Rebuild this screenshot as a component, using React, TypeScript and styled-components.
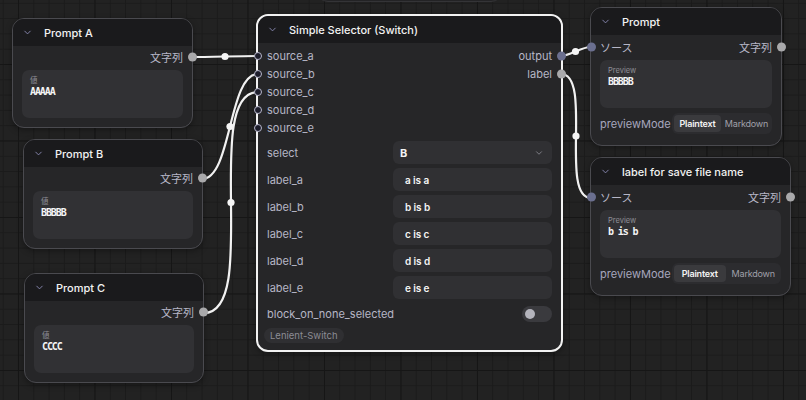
import React from "react";
import styled, { createGlobalStyle } from "styled-components";
import { ChevronDown } from "lucide-react";

const GlobalStyle = createGlobalStyle`
  html, body {
    margin: 0;
    padding: 0;
    background: #212121;
  }
  body {
    font-family: Inter, "Noto Sans CJK JP", sans-serif;
  }
`;

type Pt = { x: number; y: number };

// litegraph-style spline between two sockets
const wire = (a: Pt, b: Pt) => {
  const d = Math.hypot(b.x - a.x, b.y - a.y) * 0.25;
  const c1 = a.x + d;
  const c2 = b.x - d;
  return {
    path: `M${a.x} ${a.y} C${c1} ${a.y} ${c2} ${b.y} ${b.x} ${b.y}`,
    mid: { x: (a.x + 3 * c1 + 3 * c2 + b.x) / 8, y: (a.y + b.y) / 2 },
  };
};

const links: [Pt, Pt][] = [
  [{ x: 192, y: 57 }, { x: 258, y: 56 }],
  [{ x: 202, y: 179 }, { x: 258, y: 74 }],
  [{ x: 204, y: 313 }, { x: 258, y: 92 }],
  [{ x: 561, y: 56 }, { x: 590, y: 47 }],
  [{ x: 561, y: 74 }, { x: 591, y: 198 }],
];

const Canvas = styled.div`
  position: relative;
  width: 806px;
  height: 400px;
  overflow: hidden;
  background-color: #222222;
  background-image: linear-gradient(#161616 1px, transparent 1px),
    linear-gradient(90deg, #161616 1px, transparent 1px),
    linear-gradient(#1b1b1b 1px, transparent 1px),
    linear-gradient(90deg, #1b1b1b 1px, transparent 1px);
  background-size: 76.5px 76.5px, 76.5px 76.5px, 15.3px 15.3px, 15.3px 15.3px;
  background-position: 18px 64px;
`;

const Wires = styled.svg`
  position: absolute;
  inset: 0;
`;

const Node = styled.div<{ $x: number; $y: number; $w: number; $selected?: boolean }>`
  position: absolute;
  left: ${(p) => p.$x}px;
  top: ${(p) => p.$y}px;
  width: ${(p) => p.$w}px;
  box-sizing: border-box;
  background: #262628;
  border: ${(p) => (p.$selected ? "2px solid #f2f2f2" : "1px solid #4a4a4f")};
  border-radius: 12px;
  box-shadow: 0 2px 6px rgba(0, 0, 0, 0.35);
`;

const Ghost = styled(Node)`
  height: 62px;
  border-color: #343437;
  background: #232325;
  box-shadow: none;
`;

const Header = styled.div`
  height: 27px;
  display: flex;
  align-items: center;
  gap: 11px;
  padding: 0 9px;
  background: #1a1a1c;
  border-radius: 11px 11px 0 0;
  color: #f2f2f2;
  font-size: 11px;
  font-weight: 500;
  white-space: nowrap;
`;

const Body = styled.div<{ $top?: number; $bottom?: number }>`
  display: flex;
  flex-direction: column;
  padding: ${(p) => p.$top ?? 3}px 9px ${(p) => p.$bottom ?? 9}px;
`;

const SlotRow = styled.div<{ $h?: number }>`
  position: relative;
  height: ${(p) => p.$h ?? 16}px;
  display: flex;
  align-items: center;
  justify-content: space-between;
  font-size: 11px;
  color: #b6b6c6;
  white-space: nowrap;
`;

const SlotName = styled.span<{ $right?: boolean }>`
  position: relative;
  margin-left: ${(p) => (p.$right ? "auto" : "0")};
`;

const Port = styled.span<{ $side: "left" | "right"; $color: string; $ring?: boolean; $size?: number }>`
  position: absolute;
  top: 50%;
  ${(p) => p.$side}: -13.5px;
  width: ${(p) => p.$size ?? 9}px;
  height: ${(p) => p.$size ?? 9}px;
  transform: translateY(-50%);
  box-sizing: border-box;
  border-radius: 50%;
  background: ${(p) => p.$color};
  border: ${(p) => (p.$ring ? "1.5px solid #b8b8cc" : "none")};
`;

const TextBox = styled.div`
  margin-top: 5px;
  height: 48px;
  box-sizing: border-box;
  padding: 6px 8px;
  border-radius: 7px;
  background: #313134;
`;

const BoxLabel = styled.div`
  font-size: 7.5px;
  color: #8e8e96;
  line-height: 10px;
`;

const Mono = styled.div`
  font-family: "DejaVu Sans Mono", monospace;
  font-weight: bold;
  font-size: 10px;
  letter-spacing: -1.1px;
  color: #f4f4f4;
  line-height: 12px;
  white-space: pre;
`;

const Widgets = styled.div`
  margin-top: 4px;
  display: grid;
  grid-template-columns: 126px 1fr;
  grid-auto-rows: 23px;
  row-gap: 4px;
  align-items: center;
  font-size: 11px;
  color: #b6b6c6;
`;

const Field = styled.div<{ $select?: boolean }>`
  height: 23px;
  display: flex;
  align-items: center;
  justify-content: space-between;
  padding: 0 8px 0 ${(p) => (p.$select ? 7 : 12)}px;
  box-sizing: border-box;
  border-radius: 6px;
  background: #303033;
  color: #f4f4f4;
  font-size: ${(p) => (p.$select ? 11 : 10)}px;
  font-weight: ${(p) => (p.$select ? 700 : 600)};
  letter-spacing: ${(p) => (p.$select ? 0 : -0.1)}px;
  white-space: pre;
`;

const ToggleRow = styled.div`
  margin-top: 7px;
  height: 16px;
  display: flex;
  align-items: center;
  justify-content: space-between;
  font-size: 11px;
  color: #b6b6c6;
`;

const Toggle = styled.span`
  width: 30px;
  height: 16px;
  border-radius: 8px;
  background: #3a3a3e;
  display: flex;
  align-items: center;
  padding-left: 3px;
  box-sizing: border-box;
  &::before {
    content: "";
    width: 10px;
    height: 10px;
    border-radius: 50%;
    background: #b4b4bc;
  }
`;

const Badge = styled.span`
  align-self: flex-start;
  margin-top: 6px;
  margin-left: -3px;
  height: 15px;
  display: flex;
  align-items: center;
  padding: 0 6px;
  border-radius: 8px;
  background: #2f2f32;
  color: #8c8c94;
  font-size: 9.5px;
`;

const ModeRow = styled.div`
  margin-top: 5px;
  height: 21px;
  display: flex;
  align-items: center;
  font-size: 11px;
  color: #a6a6be;
`;

const ModeLabel = styled.span`
  width: 72px;
  flex: none;
`;

const Segmented = styled.div`
  flex: 1;
  height: 21px;
  display: flex;
  padding: 2px;
  box-sizing: border-box;
  gap: 2px;
  border-radius: 6px;
  background: #2c2c2f;
`;

const Segment = styled.span<{ $active?: boolean }>`
  flex: 1;
  display: flex;
  align-items: center;
  justify-content: center;
  border-radius: 4px;
  font-size: 9px;
  letter-spacing: -0.2px;
  font-weight: ${(p) => (p.$active ? 600 : 400)};
  color: ${(p) => (p.$active ? "#f4f4f4" : "#a0a0aa")};
  background: ${(p) => (p.$active ? "#3a3a3d" : "transparent")};
`;

const Chevron = () => <ChevronDown size={11} color="#8a8ab4" strokeWidth={2} />;

const STRING_PORT = "#a9a9ab";
const SOURCE_PORT = "#6b6f8f";

type PromptProps = { x: number; y: number; w: number; title: string; value: string };

const PromptNode = ({ x, y, w, title, value }: PromptProps) => (
  <Node $x={x} $y={y} $w={w}>
    <Header>
      <Chevron />
      {title}
    </Header>
    <Body>
      <SlotRow>
        <SlotName $right>文字列</SlotName>
        <Port $side="right" $color={STRING_PORT} />
      </SlotRow>
      <TextBox>
        <BoxLabel>値</BoxLabel>
        <Mono>{value}</Mono>
      </TextBox>
    </Body>
  </Node>
);

const PreviewNode = ({ x, y, w, title, value }: PromptProps) => (
  <Node $x={x} $y={y} $w={w}>
    <Header>
      <Chevron />
      {title}
    </Header>
    <Body $top={4} $bottom={11}>
      <SlotRow>
        <Port $side="left" $color={SOURCE_PORT} />
        <SlotName>ソース</SlotName>
        <SlotName $right>文字列</SlotName>
        <Port $side="right" $color={STRING_PORT} />
      </SlotRow>
      <TextBox>
        <BoxLabel>Preview</BoxLabel>
        <Mono>{value}</Mono>
      </TextBox>
      <ModeRow>
        <ModeLabel>previewMode</ModeLabel>
        <Segmented>
          <Segment $active>Plaintext</Segment>
          <Segment>Markdown</Segment>
        </Segmented>
      </ModeRow>
    </Body>
  </Node>
);

const inputs = ["source_a", "source_b", "source_c", "source_d", "source_e"];
const outputs = [
  { name: "output", color: SOURCE_PORT },
  { name: "label", color: STRING_PORT },
];
const labels = ["a", "b", "c", "d", "e"];

const SelectorNode = () => (
  <Node $x={256} $y={14} $w={307} $selected>
    <Header>
      <Chevron />
      Simple Selector (Switch)
    </Header>
    <Body $top={4} $bottom={7}>
      {inputs.map((name, i) => (
        <SlotRow key={name} $h={18}>
          <Port $side="left" $color="#1d1d2b" $ring $size={8} />
          <SlotName>{name}</SlotName>
          {outputs[i] && (
            <>
              <SlotName $right>{outputs[i].name}</SlotName>
              <Port $side="right" $color={outputs[i].color} />
            </>
          )}
        </SlotRow>
      ))}
      <Widgets>
        <span>select</span>
        <Field $select>
          B
          <ChevronDown size={10} color="#8c8c94" />
        </Field>
        {labels.map((l) => (
          <React.Fragment key={l}>
            <span>label_{l}</span>
            <Field>{`${l} is ${l}`}</Field>
          </React.Fragment>
        ))}
      </Widgets>
      <ToggleRow>
        block_on_none_selected
        <Toggle />
      </ToggleRow>
      <Badge>Lenient-Switch</Badge>
    </Body>
  </Node>
);

const App: React.FC = () => (
  <Canvas>
    <GlobalStyle />
    <Wires width={806} height={400}>
      {links.map(([a, b], i) => {
        const { path, mid } = wire(a, b);
        return (
          <g key={i}>
            <path d={path} fill="none" stroke="#f2f2f2" strokeWidth={2.2} />
            <circle cx={mid.x} cy={mid.y} r={3.6} fill="#f6f6f6" />
          </g>
        );
      })}
    </Wires>
    <Ghost $x={316} $y={-60} $w={187} />
    <PromptNode x={12} y={18} w={181} title="Prompt A" value="AAAAA" />
    <PromptNode x={23} y={139} w={180} title="Prompt B" value="BBBBB" />
    <PromptNode x={24} y={273} w={180} title="Prompt C" value="CCCC" />
    <SelectorNode />
    <PreviewNode x={590} y={7} w={192} title="Prompt" value="BBBBB" />
    <PreviewNode x={590} y={157} w={201} title="label for save file name" value="b is b" />
  </Canvas>
);

export default App;
